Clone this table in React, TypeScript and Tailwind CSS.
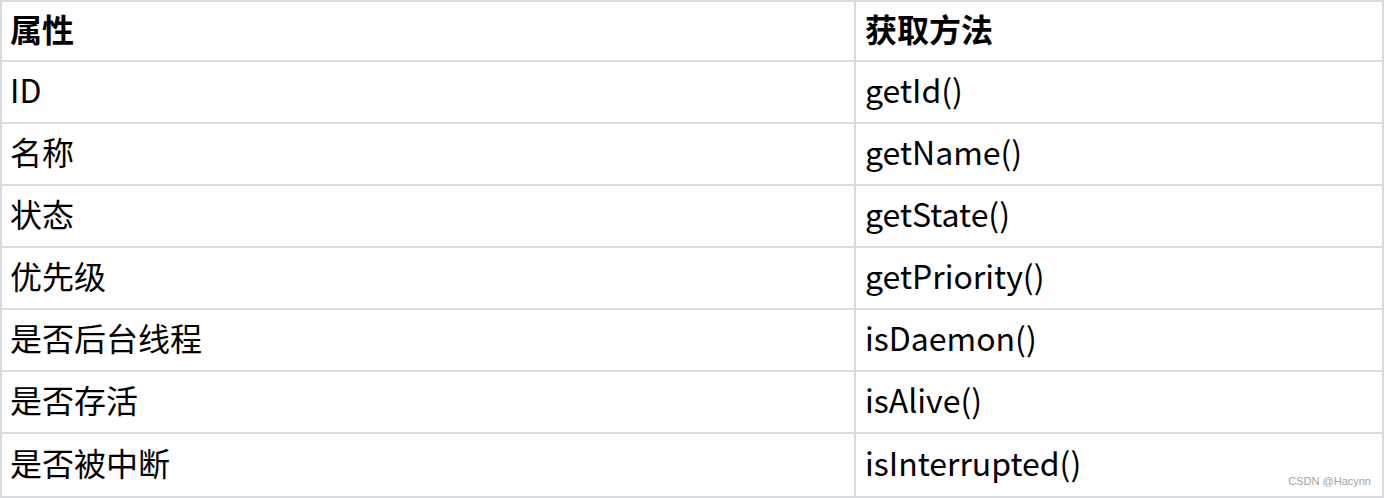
import React from 'react'

const ROWS: [string, string][] = [
	['ID', 'getId()'],
	['名称', 'getName()'],
	['状态', 'getState()'],
	['优先级', 'getPriority()'],
	['是否后台线程', 'isDaemon()'],
	['是否存活', 'isAlive()'],
	['是否被中断', 'isInterrupted()'],
]

const FONT = { fontFamily: '"Noto Sans CJK SC", "Noto Sans", sans-serif' }

export default function App() {
	return (
		<div className="relative w-[1386px] h-[498px] bg-white text-black" style={FONT}>
			<div className="w-[1384px] border-2 border-[#d8dbdf]">
				<div className="flex h-[60px] border-b-2 border-[#d8dbdf] font-bold text-[32px]">
					<div className="w-[854px] border-r-2 border-[#d8dbdf] pl-[8px] pb-[6px] flex items-center">属性</div>
					<div className="flex-1 pl-[9px] pb-[6px] flex items-center">获取方法</div>
				</div>
				{ROWS.map(([name, method], i) => (
					<div
						key={name}
						className={`flex h-[62px] text-[32px] ${i < ROWS.length - 1 ? 'border-b-2 border-[#d8dbdf]' : ''}`}
					>
						<div className="w-[854px] border-r-2 border-[#d8dbdf] pl-[8px] pb-[6px] flex items-center">{name}</div>
						<div className="flex-1 pl-[9px] pb-[6px] flex items-center">{method}</div>
					</div>
				))}
			</div>
			<span
				className="absolute right-[15px] bottom-[9px] text-[11px] text-[#a3a3a3]"
				style={{ fontFamily: '"Liberation Sans", Arial, sans-serif' }}
			>
				CSDN @Hacynn
			</span>
		</div>
	)
}
